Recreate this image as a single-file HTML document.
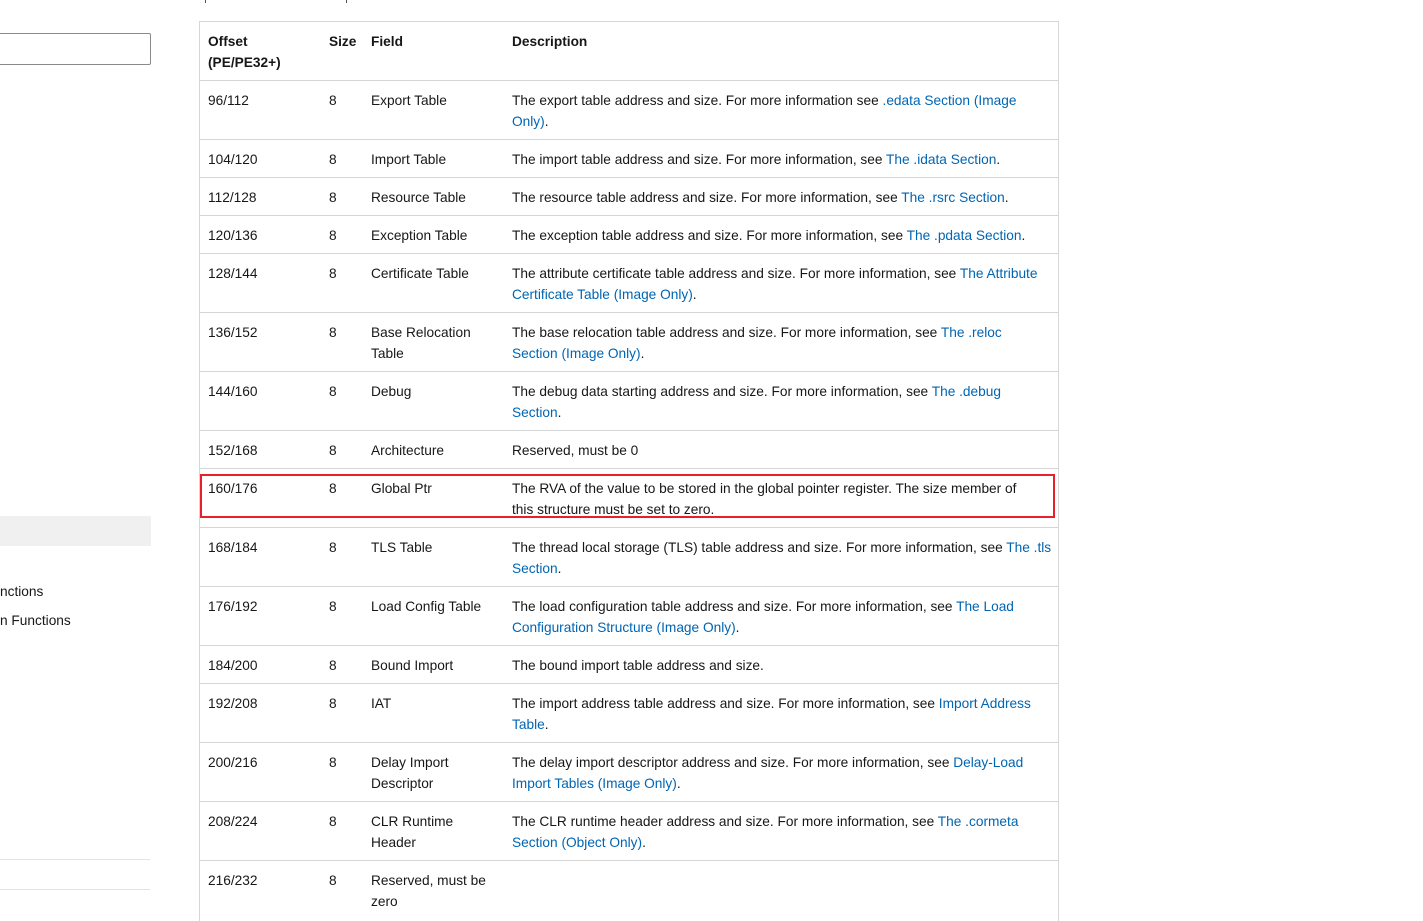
<!DOCTYPE html>
<html><head><meta charset="utf-8">
<style>
body{margin:0;width:1423px;height:910px;overflow:hidden;background:#fff;font-family:"Liberation Sans",sans-serif;font-size:13.7px;color:#171717;position:relative}
.a{position:absolute}
.r{position:absolute;left:199px;width:859px;border-top:1px solid #d6d6d6}
.c{position:absolute;top:9px;line-height:21px;white-space:nowrap}
.c1{left:9px}.c2{left:130px}.c3{left:172px}.c4{left:313px}
a{color:#0065b3;text-decoration:none}
b{font-weight:bold}
</style></head><body>
<div class="a" style="left:205px;top:0;width:1px;height:3px;background:#555"></div>
<div class="a" style="left:346px;top:0;width:1px;height:3px;background:#555"></div>
<div class="a" style="left:-2px;top:33px;width:151px;height:30px;border:1px solid #8a8a8a;border-radius:2px"></div>
<div class="a" style="left:0;top:516px;width:151px;height:30px;background:#f0f0f0"></div>
<div class="a" style="left:0;top:581px;line-height:21px">nctions</div>
<div class="a" style="left:0;top:610px;line-height:21px">n Functions</div>
<div class="a" style="left:0;top:859px;width:150px;height:1px;background:#e3e3e3"></div>
<div class="a" style="left:0;top:889px;width:150px;height:1px;background:#e3e3e3"></div>
<div class="a" style="left:199px;top:21px;width:858px;height:900px;border-left:1px solid #d6d6d6;border-right:1px solid #d6d6d6"></div>

<div class="r" style="top:21px"><div class="c c1"><b>Offset<br>(PE/PE32+)</b></div><div class="c c2"><b>Size</b></div><div class="c c3"><b>Field</b></div><div class="c c4"><b>Description</b></div></div>
<div class="r" style="top:80px"><div class="c c1">96/112</div><div class="c c2">8</div><div class="c c3">Export Table</div><div class="c c4">The export table address and size. For more information see <a>.edata Section (Image<br>Only)</a>.</div></div>
<div class="r" style="top:139px"><div class="c c1">104/120</div><div class="c c2">8</div><div class="c c3">Import Table</div><div class="c c4">The import table address and size. For more information, see <a>The .idata Section</a>.</div></div>
<div class="r" style="top:177px"><div class="c c1">112/128</div><div class="c c2">8</div><div class="c c3">Resource Table</div><div class="c c4">The resource table address and size. For more information, see <a>The .rsrc Section</a>.</div></div>
<div class="r" style="top:215px"><div class="c c1">120/136</div><div class="c c2">8</div><div class="c c3">Exception Table</div><div class="c c4">The exception table address and size. For more information, see <a>The .pdata Section</a>.</div></div>
<div class="r" style="top:253px"><div class="c c1">128/144</div><div class="c c2">8</div><div class="c c3">Certificate Table</div><div class="c c4">The attribute certificate table address and size. For more information, see <a>The Attribute<br>Certificate Table (Image Only)</a>.</div></div>
<div class="r" style="top:312px"><div class="c c1">136/152</div><div class="c c2">8</div><div class="c c3">Base Relocation<br>Table</div><div class="c c4">The base relocation table address and size. For more information, see <a>The .reloc<br>Section (Image Only)</a>.</div></div>
<div class="r" style="top:371px"><div class="c c1">144/160</div><div class="c c2">8</div><div class="c c3">Debug</div><div class="c c4">The debug data starting address and size. For more information, see <a>The .debug<br>Section</a>.</div></div>
<div class="r" style="top:430px"><div class="c c1">152/168</div><div class="c c2">8</div><div class="c c3">Architecture</div><div class="c c4">Reserved, must be 0</div></div>
<div class="r" style="top:468px"><div class="c c1">160/176</div><div class="c c2">8</div><div class="c c3">Global Ptr</div><div class="c c4">The RVA of the value to be stored in the global pointer register. The size member of<br>this structure must be set to zero.</div></div>
<div class="r" style="top:527px"><div class="c c1">168/184</div><div class="c c2">8</div><div class="c c3">TLS Table</div><div class="c c4">The thread local storage (TLS) table address and size. For more information, see <a>The .tls<br>Section</a>.</div></div>
<div class="r" style="top:586px"><div class="c c1">176/192</div><div class="c c2">8</div><div class="c c3">Load Config Table</div><div class="c c4">The load configuration table address and size. For more information, see <a>The Load<br>Configuration Structure (Image Only)</a>.</div></div>
<div class="r" style="top:645px"><div class="c c1">184/200</div><div class="c c2">8</div><div class="c c3">Bound Import</div><div class="c c4">The bound import table address and size.</div></div>
<div class="r" style="top:683px"><div class="c c1">192/208</div><div class="c c2">8</div><div class="c c3">IAT</div><div class="c c4">The import address table address and size. For more information, see <a>Import Address<br>Table</a>.</div></div>
<div class="r" style="top:742px"><div class="c c1">200/216</div><div class="c c2">8</div><div class="c c3">Delay Import<br>Descriptor</div><div class="c c4">The delay import descriptor address and size. For more information, see <a>Delay-Load<br>Import Tables (Image Only)</a>.</div></div>
<div class="r" style="top:801px"><div class="c c1">208/224</div><div class="c c2">8</div><div class="c c3">CLR Runtime<br>Header</div><div class="c c4">The CLR runtime header address and size. For more information, see <a>The .cormeta<br>Section (Object Only)</a>.</div></div>
<div class="r" style="top:860px"><div class="c c1">216/232</div><div class="c c2">8</div><div class="c c3">Reserved, must be<br>zero</div></div>

<div class="a" style="left:200px;top:474px;width:851px;height:40px;border:2px solid #e8202a"></div>
</body></html>
